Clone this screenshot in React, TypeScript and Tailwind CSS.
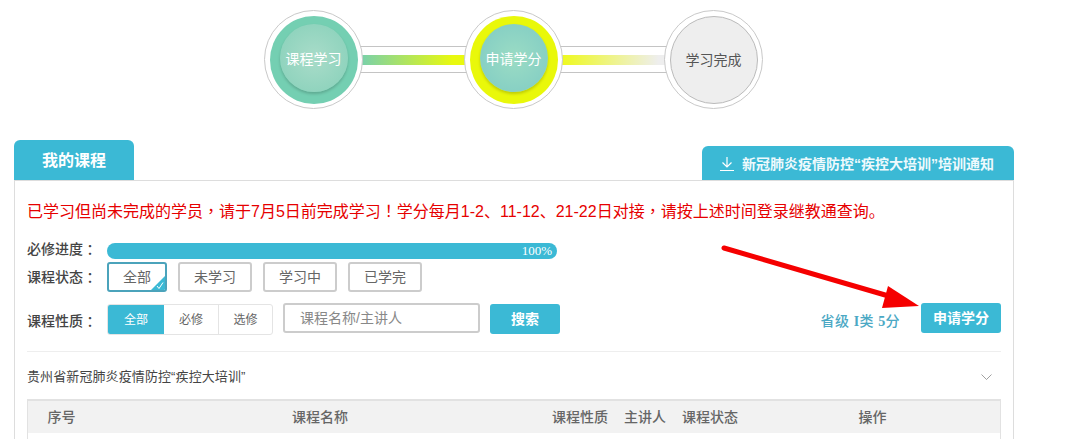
import type { ReactNode } from "react";

const punct = "font-['Noto_Sans_CJK_TC',sans-serif]";

function Step({ label, ring, inner, text, done }: { label: string; ring: string; inner: string; text: string; done?: boolean }) {
  return (
    <div className="relative z-10 flex h-[99px] w-[99px] shrink-0 items-center justify-center rounded-full border border-[#c9c9c9] bg-white">
      <div className={`flex h-[88px] w-[88px] items-center justify-center rounded-full ${ring}`}>
        {done ? (
          <span className={`text-sm ${text}`}>{label}</span>
        ) : (
          <div className={`mb-[3px] flex h-[68px] w-[68px] items-center justify-center rounded-full shadow-[0_2px_3px_rgba(0,0,0,0.18)] ${inner}`}>
            <span className={`pt-[1px] text-sm ${text}`}>{label}</span>
          </div>
        )}
      </div>
    </div>
  );
}

function Connector({ bar }: { bar: string }) {
  return (
    <div className="-mx-[6px] flex h-[27px] w-[113px] shrink-0 items-center border-y border-[#c4c4c4] bg-white">
      <div className={`h-[10px] w-full ${bar}`} />
    </div>
  );
}

function Label({ children, className = "" }: { children: ReactNode; className?: string }) {
  return (
    <div className={`flex w-[80px] shrink-0 text-sm font-medium text-[#444] ${className}`}>
      {children}
      <span lang="zh-TW" className={punct}>：</span>
    </div>
  );
}

function Chip({ children, active }: { children: ReactNode; active?: boolean }) {
  if (active) {
    return (
      <div className="relative flex h-[30px] w-[60px] items-center justify-center overflow-hidden rounded-[3px] border-2 border-[#4ba3bb] text-sm text-[#666]">
        {children}
        <svg className="absolute bottom-0 right-0" width="14" height="14" viewBox="0 0 14 14">
          <polygon points="14,0 14,14 0,14" fill="#3bb9d5" />
          <path d="M6 10 L8 12.5 L12 6.5" fill="none" stroke="#fff" strokeWidth="1" />
        </svg>
      </div>
    );
  }
  return (
    <div className="flex h-[30px] w-[74px] items-center justify-center rounded-[3px] border-2 border-[#ccc] text-sm text-[#666]">
      {children}
    </div>
  );
}

export default function App() {
  return (
    <div lang="zh-CN" className="relative h-[439px] w-[1070px] overflow-hidden bg-white font-['Liberation_Sans','Noto_Sans_CJK_SC',sans-serif]">
      {/* steps */}
      <div className="ml-[264px] flex items-center pt-[10px]">
        <Step label="课程学习" ring="bg-[#74cfb2]" inner="bg-[radial-gradient(circle,#a9dcc9,#86d0b9)]" text="text-white" />
        <Connector bar="bg-[linear-gradient(to_right,#74cfb2,#e9f90f_85%)]" />
        <Step label="申请学分" ring="bg-[#e9f80a]" inner="bg-[radial-gradient(circle,#9bdcc4,#7fcbc4)]" text="text-white" />
        <Connector bar="bg-[linear-gradient(to_right,#eefa14,#eeeeee_90%)]" />
        <Step label="学习完成" ring="bg-[#eeeeee] border border-[#bbb]" inner="" text="text-[#555]" done />
      </div>

      <div className="mx-[14px] mt-[31px] w-[1000px]">
        {/* tabs */}
        <div className="flex items-end justify-between">
          <div className="flex h-[40px] w-[120px] items-center justify-center rounded-t-[6px] bg-[#3bb9d5] pt-[1px] text-base font-bold text-white">
            我的课程
          </div>
          <div className="flex h-[34px] w-[312px] items-center gap-[8px] rounded-t-[6px] bg-[#3bb9d5] pl-[18px] pt-[1px] text-sm font-bold text-[#eefafd]">
            <svg width="14" height="14" viewBox="0 0 14 14" fill="none" stroke="#fff" strokeWidth="1.2">
              <path d="M7 0 V10 M2.5 5.5 L7 10 L11.5 5.5 M0 13.5 H14" />
            </svg>
            新冠肺炎疫情防控“疾控大培训”培训通知
          </div>
        </div>

        {/* card */}
        <div className="h-[300px] border border-[#ddd] px-[12px]">
          <p className="pt-[17px] text-base leading-[24px] text-[#e60000]">
            已学习但尚未完成的学员<span lang="zh-TW" className={punct}>，</span>请于7月5日前完成学习<span lang="zh-TW" className={punct}>！</span>学分每月1-2、11-12、21-22日对接<span lang="zh-TW" className={punct}>，</span>请按上述时间登录继教通查询。
          </p>

          <div className="mt-[19px] flex h-[16px] items-center">
            <Label className="-mt-[5px]">必修进度</Label>
            <div className="flex h-[16px] w-[450px] items-center justify-end rounded-full bg-[#3bb9d5] pr-[5px] font-['Liberation_Serif',serif] text-[13px] text-white">
              100%
            </div>
          </div>

          <div className="mt-[3px] flex items-center">
            <Label>课程状态</Label>
            <div className="flex gap-[11px]">
              <Chip active>全部</Chip>
              <Chip>未学习</Chip>
              <Chip>学习中</Chip>
              <Chip>已学完</Chip>
            </div>
          </div>

          <div className="mt-[11px] flex items-center">
            <Label className="pt-[3px]">课程性质</Label>
            <div className="mt-[1px] flex h-[31px] w-[166px] overflow-hidden rounded-[3px] border border-[#e4e4e4] text-xs text-[#666]">
              <div className="flex w-[56px] items-center justify-center bg-[#3bb9d5] text-white">全部</div>
              <div className="flex w-[55px] items-center justify-center border-r border-[#e4e4e4]">必修</div>
              <div className="flex flex-1 items-center justify-center">选修</div>
            </div>
            <div className="mb-[2px] ml-[10px] flex h-[30px] w-[197px] items-center rounded-[3px] border-2 border-[#ccc] pl-[15px] text-sm text-[#888]">
              课程名称/主讲人
            </div>
            <div className="ml-[10px] flex h-[30px] w-[70px] items-center justify-center rounded-[3px] bg-[#3bb9d5] text-sm font-bold text-white">
              搜索
            </div>
            <div className="ml-auto flex items-center">
              <span className="pt-[4px] text-sm font-medium tracking-[0.4px] text-[#4ba8c4]">
                省级 <span className="font-['Liberation_Serif',serif] font-bold">I</span>类 <span className="font-['Liberation_Serif',serif] font-bold">5</span>分
              </span>
              <div className="mb-[2px] ml-[21px] flex h-[30px] w-[80px] items-center justify-center rounded-[3px] bg-[#3bb9d5] text-sm font-bold text-white">
                申请学分
              </div>
            </div>
          </div>

          <div className="mt-[16px] flex h-[48px] items-center justify-between border-t border-[#eee] pr-[9px] pt-[2px] text-[13px] tracking-[0.1px] text-[#444]">
            贵州省新冠肺炎疫情防控“疾控大培训”
            <svg width="11" height="6" viewBox="0 0 11 6" fill="none" stroke="#888" strokeWidth="0.8">
              <path d="M0.5 0.5 L5.5 5.5 L10.5 0.5" />
            </svg>
          </div>

          {/* table */}
          <div className="h-[60px] border-x border-t-2 border-[#e2e2e2]">
            <div className="grid h-[32px] grid-cols-[67px_450px_70px_60px_70px_1fr] items-center bg-[#f2f2f2] text-center text-sm font-medium text-[#666]">
              <div>序号</div>
              <div>课程名称</div>
              <div>课程性质</div>
              <div>主讲人</div>
              <div>课程状态</div>
              <div>操作</div>
            </div>
          </div>
        </div>
      </div>

      {/* annotation arrow */}
      <svg className="absolute left-0 top-0" width="1070" height="439" viewBox="0 0 1070 439">
        <path d="M724 248 L892 297" stroke="#f50000" strokeWidth="5" strokeLinecap="round" fill="none" />
        <polygon points="888,286 919,306 882,308" fill="#f50000" />
      </svg>
    </div>
  );
}
